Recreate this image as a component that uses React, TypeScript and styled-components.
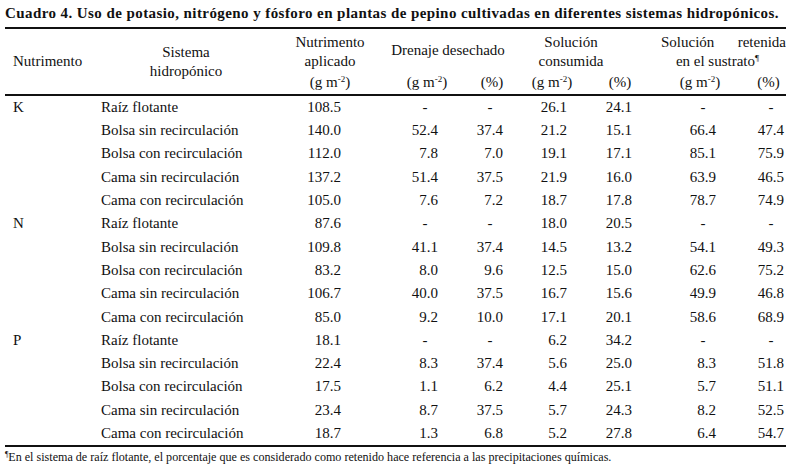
import React from 'react';
import styled, { createGlobalStyle } from 'styled-components';

const serif = `"Liberation Serif", "Times New Roman", "DejaVu Serif", serif`;

const GlobalStyle = createGlobalStyle`
  body {
    margin: 0;
    background: #fff;
    color: #111;
    font-family: ${serif};
  }
`;

const Page = styled.div`
  width: 781px;
  padding: 4px 0 0 5px;
  font-family: ${serif};
`;

const Title = styled.h1`
  margin: 0;
  font-family: ${serif};
  font-size: 15px;
  font-weight: bold;
  letter-spacing: 0.42px;
  line-height: 18px;
  white-space: nowrap;
`;

const Table = styled.table`
  margin-top: 5px;
  width: 781px;
  border-collapse: collapse;
  table-layout: fixed;
  font-family: ${serif};
  font-size: 15px;
  border-top: 2px solid #111;
  border-bottom: 2px solid #111;
`;

const HeadRow = styled.tr<{ $h: number; $rule?: boolean }>`
  height: ${(p) => p.$h}px;
  border-bottom: ${(p) => (p.$rule ? '2px solid #111' : 'none')};
`;

const Th = styled.th<{ $v?: 'top' | 'middle' | 'bottom'; $left?: boolean; $pl?: number; $pr?: number }>`
  font-weight: normal;
  line-height: 19px;
  padding: 0 ${(p) => p.$pr ?? 0}px 0 ${(p) => p.$pl ?? 0}px;
  text-align: ${(p) => (p.$left ? 'left' : 'center')};
  vertical-align: ${(p) => p.$v ?? 'middle'};
  white-space: nowrap;
`;

const Spread = styled.div`
  display: flex;
  justify-content: space-between;
  padding-left: 12px;
`;

const Row = styled.tr`
  height: 23.3px;
`;

const Td = styled.td<{ $left?: boolean; $pl?: number; $pr?: number }>`
  padding: 0 ${(p) => p.$pr ?? 0}px 0 ${(p) => p.$pl ?? 0}px;
  text-align: ${(p) => (p.$left ? 'left' : 'right')};
  line-height: 23px;
  white-space: nowrap;
`;

const Dash = styled.span`
  display: inline-block;
  width: 26px;
  text-align: center;
`;

const Sup = styled.sup`
  font-size: 0.6em;
  line-height: 0;
  vertical-align: 0.55em;
`;

const Note = styled.p`
  margin: 3px 0 0;
  font-family: ${serif};
  font-size: 12.1px;
  line-height: 14px;
  white-space: nowrap;
`;

const cols = [90, 182, 106, 88, 42, 78, 58, 102, 35];
const pads = [42, 33, 10, 24, 17, 35, 2];

const Unit = () => (
  <>
    (g m<Sup>-2</Sup>)
  </>
);

type Line = [string, string, string[]];

const data: Line[] = [
  ['K', 'Raíz flotante', ['108.5', '-', '-', '26.1', '24.1', '-', '-']],
  ['', 'Bolsa sin recirculación', ['140.0', '52.4', '37.4', '21.2', '15.1', '66.4', '47.4']],
  ['', 'Bolsa con recirculación', ['112.0', '7.8', '7.0', '19.1', '17.1', '85.1', '75.9']],
  ['', 'Cama sin recirculación', ['137.2', '51.4', '37.5', '21.9', '16.0', '63.9', '46.5']],
  ['', 'Cama con recirculación', ['105.0', '7.6', '7.2', '18.7', '17.8', '78.7', '74.9']],
  ['N', 'Raíz flotante', ['87.6', '-', '-', '18.0', '20.5', '-', '-']],
  ['', 'Bolsa sin recirculación', ['109.8', '41.1', '37.4', '14.5', '13.2', '54.1', '49.3']],
  ['', 'Bolsa con recirculación', ['83.2', '8.0', '9.6', '12.5', '15.0', '62.6', '75.2']],
  ['', 'Cama sin recirculación', ['106.7', '40.0', '37.5', '16.7', '15.6', '49.9', '46.8']],
  ['', 'Cama con recirculación', ['85.0', '9.2', '10.0', '17.1', '20.1', '58.6', '68.9']],
  ['P', 'Raíz flotante', ['18.1', '-', '-', '6.2', '34.2', '-', '-']],
  ['', 'Bolsa sin recirculación', ['22.4', '8.3', '37.4', '5.6', '25.0', '8.3', '51.8']],
  ['', 'Bolsa con recirculación', ['17.5', '1.1', '6.2', '4.4', '25.1', '5.7', '51.1']],
  ['', 'Cama sin recirculación', ['23.4', '8.7', '37.5', '5.7', '24.3', '8.2', '52.5']],
  ['', 'Cama con recirculación', ['18.7', '1.3', '6.8', '5.2', '27.8', '6.4', '54.7']]
];

export default function App() {
  return (
    <Page>
      <GlobalStyle />
      <Title>
        Cuadro 4. Uso de potasio, nitrógeno y fósforo en plantas de pepino cultivadas en diferentes sistemas
        hidropónicos.
      </Title>
      <Table>
        <colgroup>
          {cols.map((w, i) => (
            <col key={i} style={{ width: w }} />
          ))}
        </colgroup>
        <thead>
          <HeadRow $h={43}>
            <Th rowSpan={2} $left $pl={8}>
              Nutrimento
            </Th>
            <Th rowSpan={2}>
              Sistema
              <br />
              hidropónico
            </Th>
            <Th $v='bottom'>
              Nutrimento
              <br />
              aplicado
            </Th>
            <Th colSpan={2}>Drenaje desechado</Th>
            <Th colSpan={2} $v='bottom' $pr={20}>
              Solución
              <br />
              consumida
            </Th>
            <Th colSpan={2} $v='bottom'>
              <Spread>
                <span>Solución</span>
                <span>retenida</span>
              </Spread>
              en el sustrato<Sup>¶</Sup>
            </Th>
          </HeadRow>
          <HeadRow $h={24} $rule>
            <Th>
              <Unit />
            </Th>
            <Th>
              <Unit />
            </Th>
            <Th>(%)</Th>
            <Th>
              <Unit />
            </Th>
            <Th>(%)</Th>
            <Th>
              <Unit />
            </Th>
            <Th>(%)</Th>
          </HeadRow>
        </thead>
        <tbody>
          {data.map(([n, s, v], i) => (
            <Row key={i}>
              <Td $left $pl={8}>
                {n}
              </Td>
              <Td $left $pl={6}>
                {s}
              </Td>
              {v.map((x, j) => (
                <Td key={j} $pr={pads[j]}>
                  {x === '-' ? <Dash>-</Dash> : x}
                </Td>
              ))}
            </Row>
          ))}
        </tbody>
      </Table>
      <Note>
        <Sup>¶</Sup>En el sistema de raíz flotante, el porcentaje que es considerado como retenido hace referencia a
        las precipitaciones químicas.
      </Note>
    </Page>
  );
}
